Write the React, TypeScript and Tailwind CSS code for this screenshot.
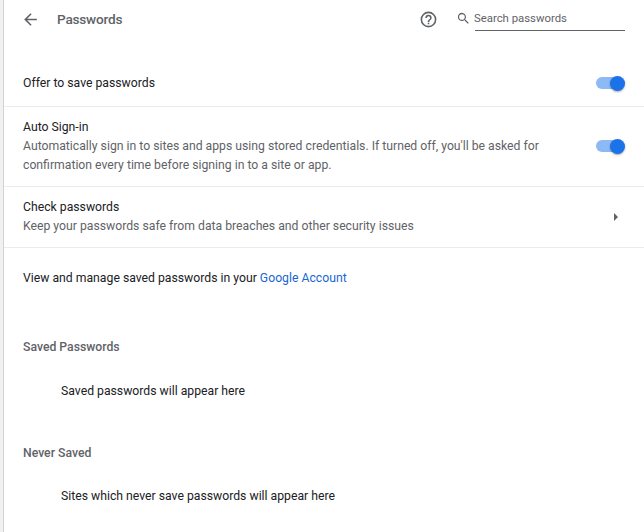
import React from "react";

function Toggle() {
  return (
    <button role="switch" aria-checked="true" className="relative h-[15px] w-[29px] shrink-0">
      <span className="absolute left-0 top-[1.5px] h-3 w-[26px] rounded-full bg-[#8db9f5]" />
      <span className="absolute right-0 top-0 size-[15px] rounded-full bg-[#1a73e8] shadow-[0_1px_2px_rgba(0,0,0,0.35)]" />
    </button>
  );
}

export default function App() {
  return (
    <div className="flex h-[532px] w-[644px] overflow-hidden bg-[#f1f1f1] pl-[3px] font-[Roboto,sans-serif] text-[12.23px] leading-[19px] text-[#202124]">
      <main className="flex w-full flex-col border-l border-[#d2d3d5] bg-white">
        <header className="flex h-[60px] items-start pl-[17px] pr-[19px] text-[#5f6368]">
          <svg viewBox="0 0 24 24" className="mt-[9.5px] size-[19px] shrink-0" fill="currentColor"><path d="M20 11H7.83l5.59-5.59L12 4l-8 8 8 8 1.41-1.41L7.83 13H20z" /></svg>
          <h1 className="ml-[17px] mt-[10px] text-[13.6px] font-medium tracking-[-0.2px]">Passwords</h1>
          <svg viewBox="0 0 24 24" className="ml-auto mt-[10px] size-[19px] shrink-0" fill="currentColor"><path d="M11 18h2v-2h-2zm1-16a10 10 0 1 0 0 20 10 10 0 0 0 0-20m0 18a8 8 0 1 1 0-16 8 8 0 0 1 0 16m0-14a4 4 0 0 0-4 4h2a2 2 0 1 1 4 0c0 2-3 1.75-3 5h2c0-2.25 3-2.5 3-5a4 4 0 0 0-4-4" /></svg>
          <svg viewBox="0 0 24 24" className="ml-[18px] mt-[11px] size-[15px] shrink-0" fill="currentColor"><path d="M15.5 14h-.79l-.28-.27A6.5 6.5 0 1 0 13.73 14.43l.27.28v.79l5 5L20.5 19zm-6 0a4.5 4.5 0 1 1 0-9 4.5 4.5 0 0 1 0 9" /></svg>
          <div className="ml-1 mt-[9px] h-[22px] w-[150px] shrink-0 border-b border-[#5f6368] text-[11.35px]"><span className="-ml-px">Search passwords</span></div>
        </header>
        <section className="flex h-[46px] items-center justify-between pl-[19px] pr-[19px]"><span>Offer to save passwords</span><Toggle /></section>
        <section className="flex h-20 items-center justify-between border-t border-[#ececec] pl-[19px] pr-[19px]">
          <div><div>Auto Sign-in</div><p className="whitespace-nowrap text-[#5f6368]">Automatically sign in to sites and apps using stored credentials. If turned off, you'll be asked for<br />confirmation every time before signing in to a site or app.</p></div><div className="-mt-px flex"><Toggle /></div>
        </section>
        <section className="flex h-[61px] items-center justify-between border-t border-[#ececec] pl-[19px] pr-[26px]">
          <div><div>Check passwords</div><p className="text-[#5f6368]">Keep your passwords safe from data breaches and other security issues</p></div>
          <svg viewBox="0 0 4 8" className="-mt-px h-2 w-1" fill="#5f6368"><path d="M0 0l4 4-4 4z" /></svg>
        </section>
        <p className="flex h-[61px] items-center border-t border-[#ececec] pl-[19px]">View and manage saved passwords in your&nbsp;<a className="text-[#1967d2]">Google Account</a></p>
        <h2 className="mt-[30px] pl-[19px] font-medium text-[#5f6368]">Saved Passwords</h2>
        <p className="mt-[25px] pl-[57px]">Saved passwords will appear here</p>
        <h2 className="mt-[43px] pl-[19px] font-medium text-[#5f6368]">Never Saved</h2>
        <p className="mt-6 pl-[57px]">Sites which never save passwords will appear here</p>
      </main>
    </div>
  );
}
